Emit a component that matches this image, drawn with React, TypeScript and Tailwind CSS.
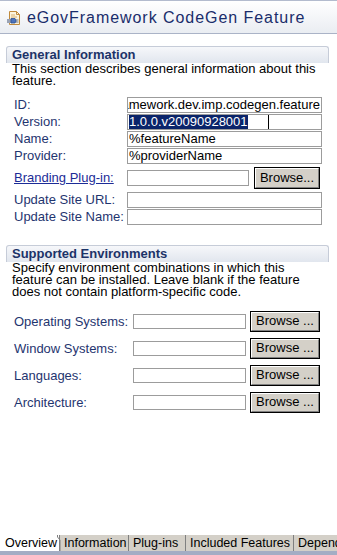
const labelColor = "text-[#1f356f]";

function FeatureIcon() {
  return (
    <svg width="16" height="16" viewBox="0 0 16 16" className="shrink-0">
      <path d="M3.5 1.5h7l3 3v10h-10z" fill="#fbf3dc" stroke="#c08a3c" />
      <path d="M10.5 1.5v3h3" fill="none" stroke="#c08a3c" />
      <path d="M5 5h4M5 7h6" stroke="#d9b273" />
      <rect x="1" y="9" width="4" height="4" fill="#9aa3b5" />
      <path d="M5 8.5h4l1 1.5v1.5l-1 1.5H5z" fill="#4d73bb" stroke="#2b4f93" strokeWidth="0.8" />
      <path d="M10 10h2.5M10 12h2.5" stroke="#6a7690" />
    </svg>
  );
}

function SectionHeader({ title }: { title: string }) {
  return (
    <div className="h-[17px] border-t border-x border-[#c6ccd8] rounded-t-[3px] bg-gradient-to-b from-[#f6f7fa] to-[#e1e6ee] pl-[5px]">
      <div className="font-bold text-[#1c3368] leading-[15px]">{title}</div>
    </div>
  );
}

function TextBox({ width, height = 16, children }: { width: number; height?: number; children?: React.ReactNode }) {
  return (
    <div
      className="shrink-0 border border-[#9c9c9c] bg-white overflow-hidden whitespace-nowrap flex items-center pl-[1px] leading-[14px] relative"
      style={{ width, height }}
    >
      {children}
    </div>
  );
}

function BrowseButton({ label, width, height }: { label: string; width: number; height: number }) {
  return (
    <div className="shrink-0 border border-black bg-[#d4d0c8]" style={{ width, height }}>
      <div className="w-full h-full border-t border-l border-t-white border-l-white border-b border-r border-b-[#808080] border-r-[#808080] flex items-center justify-center leading-[14px] pb-[1px] whitespace-nowrap">
        {label}
      </div>
    </div>
  );
}

function FieldRow({ label, children }: { label: React.ReactNode; children: React.ReactNode }) {
  return (
    <div className="flex items-center">
      <div className={`w-[121px] shrink-0 pl-[8px] whitespace-nowrap ${labelColor}`}>{label}</div>
      {children}
    </div>
  );
}

function EnvRow({ label }: { label: string }) {
  return (
    <div className="flex items-center h-[21px]">
      <div className={`w-[127px] shrink-0 pl-[8px] whitespace-nowrap ${labelColor}`}>{label}</div>
      <TextBox width={113} height={15} />
      <div className="ml-[4px]">
        <BrowseButton label="Browse ..." width={70} height={21} />
      </div>
    </div>
  );
}

const tabs = [
  { label: "Information", width: 69 },
  { label: "Plug-ins", width: 57 },
  { label: "Included Features", width: 108 },
  { label: "Dependencies", width: 60 },
];

export default function App() {
  return (
    <div className="w-[337px] h-[555px] bg-white overflow-hidden flex flex-col font-['Liberation_Sans',Arial,sans-serif] text-[13px] leading-[12px] text-black">
      {/* form title */}
      <div className="h-[34px] shrink-0 border-t border-[#b3bbce] border-b border-b-[#aab3c7] bg-gradient-to-b from-white to-[#eaedf2] flex items-center pl-[6px] gap-[5px] pt-[2px]">
        <FeatureIcon />
        <div className="text-[16px] tracking-[0.95px] text-[#1a2d6b] leading-[20px]">
          eGovFramework CodeGen Feature
        </div>
      </div>

      {/* General Information */}
      <div className="ml-[6px] mr-[8px] mt-[12px]">
        <SectionHeader title="General Information" />
        <div className="pl-[6px]">
          This section describes general information about this
          <br />
          feature.
        </div>
        <div className="mt-[10px] flex flex-col gap-[1px]">
          <FieldRow label="ID:">
            <TextBox width={195}>
              <div className="w-full flex justify-end pr-[1px]">
                <span>egovframework.dev.imp.codegen.feature</span>
              </div>
            </TextBox>
          </FieldRow>
          <FieldRow label="Version:">
            <TextBox width={195}>
              <span className="bg-[#0a246a] text-white">1.0.0.v20090928001</span>
              <svg width="7" height="17" viewBox="0 0 7 17" className="absolute left-[137px] top-[-1px]">
                <path d="M1 0.5h2M4 0.5h2M3.5 1v15M1 16.5h2M4 16.5h2" stroke="#000" strokeWidth="1" />
              </svg>
            </TextBox>
          </FieldRow>
          <FieldRow label="Name:">
            <TextBox width={195}>%featureName</TextBox>
          </FieldRow>
          <FieldRow label="Provider:">
            <TextBox width={195}>%providerName</TextBox>
          </FieldRow>
        </div>
        <div className="mt-[3px]">
          <FieldRow label={<span className="text-[#1c2c97] underline">Branding Plug-in:</span>}>
            <TextBox width={122} />
            <div className="ml-[5px]">
              <BrowseButton label="Browse..." width={66} height={22} />
            </div>
          </FieldRow>
        </div>
        <div className="mt-[3px] flex flex-col gap-[1px]">
          <FieldRow label="Update Site URL:">
            <TextBox width={195} />
          </FieldRow>
          <FieldRow label="Update Site Name:">
            <TextBox width={195} />
          </FieldRow>
        </div>
      </div>

      {/* Supported Environments */}
      <div className="ml-[6px] mr-[8px] mt-[20px]">
        <SectionHeader title="Supported Environments" />
        <div className="pl-[6px]">
          Specify environment combinations in which this
          <br />
          feature can be installed. Leave blank if the feature
          <br />
          does not contain platform-specific code.
        </div>
        <div className="mt-[13px] flex flex-col gap-[6px]">
          <EnvRow label="Operating Systems:" />
          <EnvRow label="Window Systems:" />
          <EnvRow label="Languages:" />
          <EnvRow label="Architecture:" />
        </div>
      </div>

      {/* page tabs */}
      <div className="mt-auto shrink-0">
        <div className="flex h-[16px] bg-[#d4d0c8] whitespace-nowrap overflow-hidden text-[12.5px]">
          <div className="w-[59px] shrink-0 bg-white pl-[5px] leading-[16px] relative">
            Overview
            <svg width="4" height="16" viewBox="0 0 4 16" className="absolute right-[-2px] top-0">
              <path d="M0.5 0v2l2.5 3v11" fill="none" stroke="#7f7f7f" />
            </svg>
          </div>
          {tabs.map((t) => (
            <div
              key={t.label}
              className="shrink-0 overflow-hidden border-l border-[#808080] pl-[4px] leading-[16px]"
              style={{ width: t.width }}
            >
              {t.label}
            </div>
          ))}
        </div>
        <div className="h-[4px] bg-[#a4adc4]" />
      </div>
    </div>
  );
}
